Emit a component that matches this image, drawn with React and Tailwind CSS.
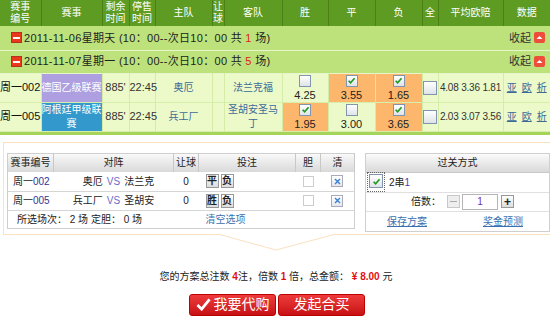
import React from 'react';

const cols = [41, 61, 27, 26, 57, 12, 58, 46, 47, 47, 16, 65, 47];

function Check({ on, big }) {
  return (
    <span
      className={
        'inline-flex items-center justify-center border border-[#8195ae] bg-gradient-to-b from-white to-[#dfe3e8] ' +
        (big ? 'w-[14px] h-[14px]' : 'w-[12px] h-[12px]')
      }
    >
      {on && (
        <svg width="9" height="9" viewBox="0 0 10 10">
          <path d="M1.8 5.2 L4 7.6 L8.4 2.4" fill="none" stroke="#1f9a1f" strokeWidth="1.8" />
        </svg>
      )}
    </span>
  );
}

function Minus() {
  return (
    <span className="inline-flex items-center justify-center w-[11px] h-[11px] bg-[#e8391f] border border-[#b8301c]">
      <span className="w-[7px] h-[2px] bg-white" />
    </span>
  );
}

function Collapse() {
  return (
    <span className="inline-flex items-center justify-center w-[11px] h-[11px] rounded-[2px] bg-[#ef4d3c]">
      <svg width="7" height="5" viewBox="0 0 7 5">
        <path d="M0.5 4 L3.5 1 L6.5 4 Z" fill="#fff" />
      </svg>
    </span>
  );
}

function Odds({ on, val }) {
  return (
    <td className={'border-r border-[#d4eca8] ' + (on ? 'bg-[#fdb76c]' : '')}>
      <div className="flex flex-col items-center gap-[3px]">
        <Check on={on} />
        <span className="leading-[11px] text-[11px] text-[#222]">{val}</span>
      </div>
    </td>
  );
}

function GroupRow({ date, n, h }) {
  return (
    <tr className={'bg-[#bde27b] border-b border-[#e6f5cb] ' + h}>
      <td colSpan={13} className="px-0">
        <div className="flex items-center justify-between pl-[11px] pr-[5px]">
          <div className="flex items-center gap-[2px] text-[#222] text-[11px] tracking-[0.3px]">
            <Minus />
            <span>
              {date} (10：00--次日10：00 共 <span className="text-[#e02020]">{n}</span> 场)
            </span>
          </div>
          <div className="flex items-center gap-[3px] text-[#333] text-[11px]">
            <span>收起</span>
            <Collapse />
          </div>
        </div>
      </td>
    </tr>
  );
}

function DataRow({ no, league, leagueBg, home, away, odds, avg }) {
  return (
    <tr className="h-[29px] bg-[#ecfac9] border-b border-[#d7efaa] text-center">
      <td className="border-r border-[#d4eca8] text-[#111] text-left whitespace-nowrap text-[11px]">{no}</td>
      <td className={'border-r border-[#d4eca8] text-white leading-[14px] px-0 ' + leagueBg}>{league}</td>
      <td className="border-r border-[#d4eca8] text-[#333] text-[11px]">885'</td>
      <td className="border-r border-[#d4eca8] text-[#333] text-[11px]">22:45</td>
      <td className="border-r border-[#d4eca8] text-[#3d6a99]">{home}</td>
      <td className="border-r border-[#d4eca8]"></td>
      <td className="border-r border-[#d4eca8] text-[#3d6a99] leading-[14px]">{away}</td>
      <Odds on={odds[0][0]} val={odds[0][1]} />
      <Odds on={odds[1][0]} val={odds[1][1]} />
      <Odds on={odds[2][0]} val={odds[2][1]} />
      <td className="border-r border-[#d4eca8]">
        <div className="flex justify-center">
          <Check big />
        </div>
      </td>
      <td className="border-r border-[#d4eca8] text-[#333] tracking-[-0.2px] whitespace-nowrap">{avg}</td>
      <td className="text-[#3d6a99]">
        <div className="flex justify-center gap-[5px] underline">
          <span>亚</span>
          <span>欧</span>
          <span>析</span>
        </div>
      </td>
    </tr>
  );
}

function SmallBtn({ t }) {
  return (
    <span className="inline-flex items-center justify-center w-[13px] h-[14px] border border-[#999] bg-gradient-to-b from-white to-[#dcdcdc] text-[10px] font-bold text-[#222] leading-none">
      {t}
    </span>
  );
}

function Clear() {
  return (
    <span className="inline-flex items-center justify-center w-[12px] h-[12px] border border-[#aab] bg-gradient-to-b from-white to-[#e4e8ee]">
      <svg width="7" height="7" viewBox="0 0 7 7">
        <path d="M1 1 L6 6 M6 1 L1 6" stroke="#3a7fd0" strokeWidth="1.4" />
      </svg>
    </span>
  );
}

function BetRow({ no, home, away, picks }) {
  return (
    <tr className="h-[19px] border-b border-[#d5d5d5]">
      <td className="pl-[5px] text-[#222] whitespace-nowrap">
        周一<span className="text-[#333399]">{no}</span>
      </td>
      <td className="text-center text-[#222] whitespace-nowrap">
        <span className="inline-block w-[32px] text-right">{home}</span>
        <span className="text-[#6a6acc] mx-[4px]">VS</span>
        <span className="inline-block w-[32px] text-left">{away}</span>
      </td>
      <td className="text-center text-[#222]">0</td>
      <td className="pl-[7px]">
        <div className="flex gap-[2px]">
          {picks.map((p) => (
            <SmallBtn key={p} t={p} />
          ))}
        </div>
      </td>
      <td>
        <div className="flex justify-center">
          <span className="w-[11px] h-[11px] border border-[#ccc] bg-white" />
        </div>
      </td>
      <td>
        <div className="flex justify-center">
          <Clear />
        </div>
      </td>
    </tr>
  );
}

const headGrad = 'bg-gradient-to-b from-[#fbfbfb] to-[#d9d9d9]';

export default function App() {
  return (
    <div className="w-[550px] h-[321px] bg-white overflow-hidden text-[10px] font-['Liberation_Sans','Noto_Sans_CJK_SC',sans-serif]">
      <table className="w-[550px] table-fixed border-collapse">
        <colgroup>
          {cols.map((w, i) => (
            <col key={i} style={{ width: w }} />
          ))}
        </colgroup>
        <thead>
          <tr className="h-[26px] bg-[#5e9b22] text-white text-center leading-[12px]">
            {[
              ['赛事', '编号'],
              ['赛事'],
              ['剩余', '时间'],
              ['停售', '时间'],
              ['主队'],
              ['让', '球'],
              ['客队'],
              ['胜'],
              ['平'],
              ['负'],
              ['全'],
              ['平均欧赔'],
              ['数据'],
            ].map((lines, i) => (
              <th key={i} className="font-normal border-r border-[#4a8014] last:border-r-0 px-0">
                {lines.map((l) => (
                  <div key={l}>{l}</div>
                ))}
              </th>
            ))}
          </tr>
        </thead>
        <tbody>
          <GroupRow date="2011-11-06星期天" n="1" h="h-[24px]" />
          <GroupRow date="2011-11-07星期一" n="5" h="h-[23px]" />
          <DataRow
            no="周一002"
            league="德国乙级联赛"
            leagueBg="bg-[#ae9fe0]"
            home="奥厄"
            away="法兰克福"
            odds={[[false, '4.25'], [true, '3.55'], [true, '1.65']]}
            avg="4.08 3.36 1.81"
          />
          <DataRow
            no="周一005"
            league="阿根廷甲级联赛"
            leagueBg="bg-[#3399cc]"
            home="兵工厂"
            away="圣胡安圣马丁"
            odds={[[true, '1.95'], [false, '3.00'], [true, '3.65']]}
            avg="2.03 3.07 3.56"
          />
        </tbody>
      </table>
      <div className="h-[3px] bg-[#a6d45a]" />

      <div className="relative mt-[7px] ml-[3px] border-t border-l border-b border-[#fbe1c0] pt-[10px] pl-[3px] pb-[2px]">
        <div className="flex gap-[10px] items-start">
          <table className="w-[347px] table-fixed border-collapse border border-[#cfcfcf]">
            <colgroup>
              <col style={{ width: 46 }} />
              <col style={{ width: 120 }} />
              <col style={{ width: 25 }} />
              <col style={{ width: 97 }} />
              <col style={{ width: 25 }} />
              <col style={{ width: 34 }} />
            </colgroup>
            <thead>
              <tr className={'h-[19px] text-[#222] ' + headGrad}>
                {['赛事编号', '对阵', '让球', '投注', '胆', '清'].map((t) => (
                  <th key={t} className="font-normal border-r border-[#c8c8c8] px-0 whitespace-nowrap">
                    {t}
                  </th>
                ))}
              </tr>
            </thead>
            <tbody>
              <BetRow no="002" home="奥厄" away="法兰克" picks={['平', '负']} />
              <BetRow no="005" home="兵工厂" away="圣胡安" picks={['胜', '负']} />
              <tr className="h-[18px] text-[#222]">
                <td colSpan={3} className="pl-[9px] whitespace-nowrap">
                  所选场次： 2 场 定胆： 0 场
                </td>
                <td colSpan={3} className="pl-[7px] text-[#3d6fb0]">
                  清空选项
                </td>
              </tr>
            </tbody>
          </table>

          <div className="w-[186px] border border-[#cfcfcf] text-[#222]">
            <div className={'h-[19px] flex items-center justify-center border-b border-[#c8c8c8] ' + headGrad}>过关方式</div>
            <div className="h-[20px] flex items-center gap-[4px] pl-[1px] border-b border-[#e0e0e0]">
              <span className="p-[1px] border border-dotted border-[#666]">
                <Check on big />
              </span>
              <span>
                2串<span className="text-[#6633aa]">1</span>
              </span>
            </div>
            <div className="h-[19px] flex items-center justify-center gap-[6px] border-b border-[#e0e0e0] pl-[10px]">
              <span>倍数：</span>
              <span className="w-[13px] h-[13px] border border-[#c8c8c8] bg-[#eee] flex items-center justify-center">
                <span className="w-[7px] h-[1px] bg-[#aaa]" />
              </span>
              <span className="w-[36px] h-[16px] border border-[#b5b5b5] flex items-center justify-center text-[#6633aa] -ml-[4px]">1</span>
              <span className="w-[13px] h-[13px] border border-[#999] bg-gradient-to-b from-white to-[#ddd] flex items-center justify-center text-[12px] font-bold leading-none -ml-[3px]">
                +
              </span>
            </div>
            <div className="h-[19px] flex items-center pl-[21px] gap-[56px] text-[#3d6fb0] underline">
              <span>保存方案</span>
              <span>奖金预测</span>
            </div>
          </div>
        </div>
        <svg className="absolute left-[214px] -bottom-[17px]" width="120" height="18" viewBox="0 0 120 18">
          <path d="M1 0.5 L117 0.5" stroke="#fff" strokeWidth="1.5" />
          <path d="M0 1 L58 17 L118 1" fill="#fff" stroke="#fbe1c0" strokeWidth="1" />
        </svg>
      </div>

      <div className="mt-[35px] text-center text-[#222] leading-[14px] pl-[2px]">
        您的方案总注数 <span className="text-[#e01010] font-bold">4</span>注，倍数{' '}
        <span className="text-[#e01010] font-bold">1</span> 倍，总金额：{' '}
        <span className="text-[#e01010] font-bold">¥ 8.00</span> 元
      </div>
      <div className="flex justify-center gap-[2px] mt-[10px] pl-[4px]">
        <button className="w-[87px] h-[22px] rounded-[3px] bg-gradient-to-b from-[#ee3a3a] to-[#c80f14] border border-[#b00] text-white text-[14px] flex items-center justify-center gap-[3px]">
          <svg width="15" height="13" viewBox="0 0 16 14">
            <path d="M1.5 7.5 L6 12 L14.5 1.5" fill="none" stroke="#fff" strokeWidth="3" />
          </svg>
          我要代购
        </button>
        <button className="w-[87px] h-[22px] rounded-[3px] bg-gradient-to-b from-[#ee3a3a] to-[#c80f14] border border-[#b00] text-white text-[14px] flex items-center justify-center">
          发起合买
        </button>
      </div>
    </div>
  );
}
